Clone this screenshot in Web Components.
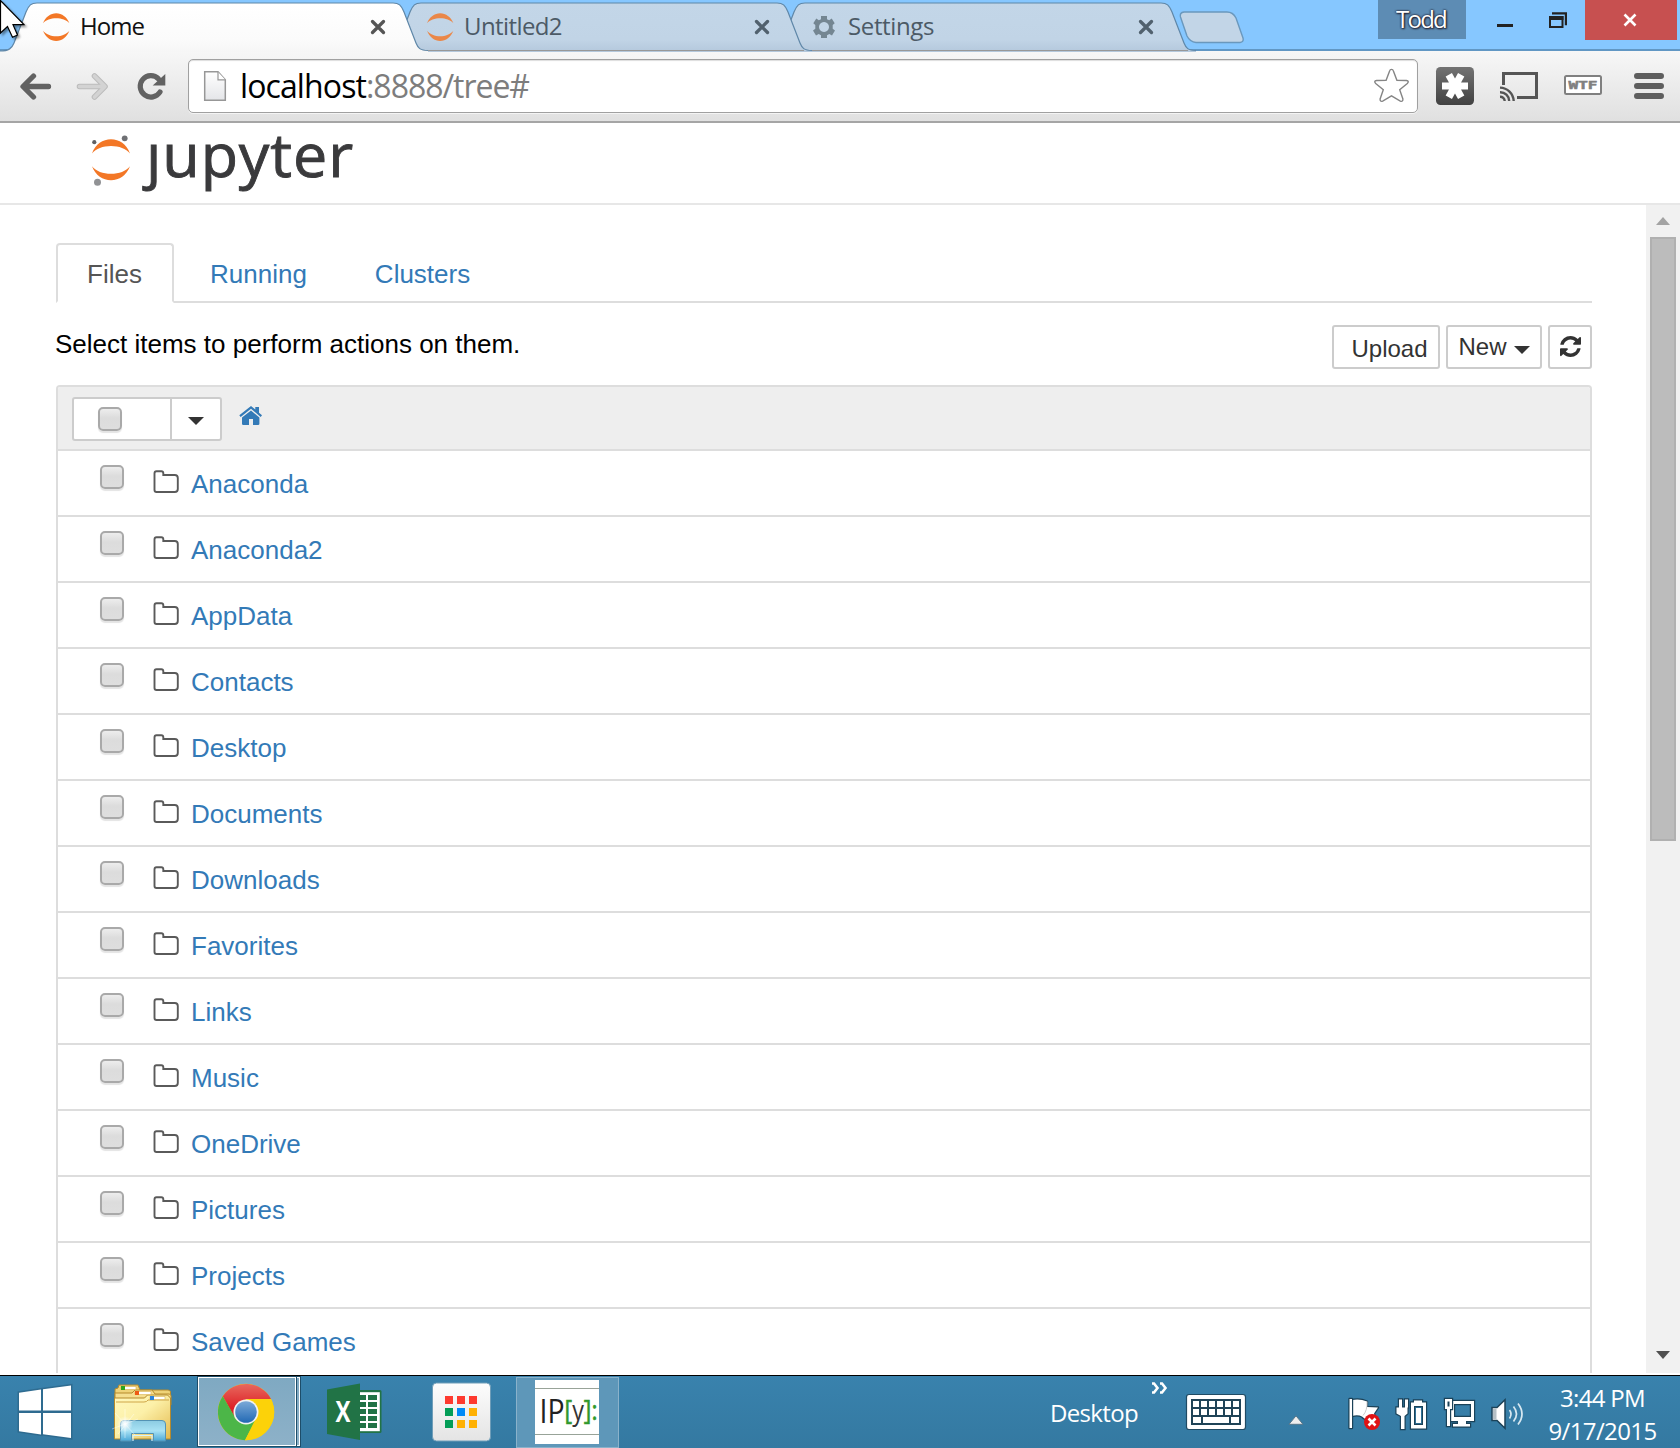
<!DOCTYPE html>
<html lang="en">
<head>
<meta charset="utf-8">
<title>Home</title>
<style>
html,body{margin:0;padding:0;height:1448px;overflow:hidden;background:#fff}
body{font-family:"Liberation Sans",Arial,sans-serif}
</style>
</head>
<body>
<desktop-screen></desktop-screen>
<script>
const UI = '"Open Sans","Noto Sans",sans-serif';
const define = (name, render, after) => customElements.define(name, class extends HTMLElement {
  connectedCallback() {
    if (this.shadowRoot) return;
    this.attachShadow({ mode: 'open' }).innerHTML = render(this);
    if (after) after(this);
  }
});

/* icon name -> [viewBox, markup] */
const ICONS = {
  jupyter: ['43 13 27 28', '<g fill="#f37726"><path d="M43 23.300C45.500 17 50.500 13.300 56.200 13.300S66.900 17 69.400 23.300C66.500 19.800 61.500 18.200 56.200 18.200S45.900 19.800 43 23.300Z"/><path d="M43 30.700C45.500 37 50.500 40.900 56.200 40.900S66.900 37 69.400 30.700C66.500 34.200 61.500 36.200 56.200 36.200S45.900 34.200 43 30.700Z"/></g>'],
  gear: ['813 16 22 22', '<path fill="#748692" fill-rule="evenodd" d="M821 16h6v3.300l2.200.9 2.500-1.700 3 4.800-2 1.700v3.800l2.300 1.700-3 4.900-2.700-1.300-2.300 1.200V38h-6v-2.700l-2.300-1.200-2.700 1.300-3-4.900 2.300-1.700V25l-2-1.700 3-4.800 2.500 1.700 2.200-.9ZM824 22a5 5 0 1 0 .01 0Z"/>'],
  close: ['0 0 16 16', '<path d="M2.500 2.500l11 11M13.500 2.500l-11 11" stroke="currentColor" stroke-width="3.300" stroke-linecap="round"/>'],
  back: ['19 72 34 29', '<path d="M33.500 76L23 86.500 33.500 97M23.500 86.500H48.500" fill="none" stroke="#626262" stroke-width="5.300" stroke-linecap="round" stroke-linejoin="round"/>'],
  forward: ['76 72 34 29', '<path d="M94.500 76L105 86.500 94.500 97M104 86.500H79.500" fill="none" stroke="#bcbcbc" stroke-width="5.600" stroke-linecap="round" stroke-linejoin="round"/><path d="M94.500 76L105 86.500 94.500 97M104 86.500H79.500" fill="none" stroke="#d3d3d3" stroke-width="3.600" stroke-linecap="round" stroke-linejoin="round"/>'],
  reload: ['137 72 30 29', '<path d="M160 92A10.700 10.700 0 1 1 158.500 78.800" fill="none" stroke="#626262" stroke-width="5.200" stroke-linecap="round"/><path d="M165.300 74v11.600h-12.600Z" fill="#626262"/>'],
  page: ['202 70 26 33', '<defs><linearGradient id="g" x2="0" y2="1"><stop stop-color="#fff"/><stop offset="1" stop-color="#e4e5e8"/></linearGradient></defs><path d="M204.700 71.800h13.300l7.300 8v20.500h-20.600Z" fill="url(#g)" stroke="#979797" stroke-width="1.500"/><path d="M218 72v7.800h7.300" fill="#fff" stroke="#979797" stroke-width="1.200"/>'],
  star: ['1373 67 37 37', '<path d="M1391.500 69.400q1.400 0 1.900 1.500l3.500 9.300 9.500.3q3.200.6.900 3l-7.600 6.200 3.200 9.300q.2 3-2.600 2.200l-8.800-5.300-8.800 5.300q-2.800.8-2.600-2.200l3.200-9.300-7.600-6.200q-2.300-2.400.9-3l9.500-.3 3.500-9.300q.5-1.500 1.900-1.500Z" fill="#fff" stroke="#858585" stroke-width="1.400"/>'],
  asterisk: ['1436 67 38 38', '<defs><linearGradient id="g" x2="0" y2="1"><stop stop-color="#737373"/><stop offset="1" stop-color="#414141"/></linearGradient></defs><rect x="1436" y="67" width="38" height="38" rx="4.500" fill="url(#g)"/><path d="M1442 86h26M1448.800 74.800l12.400 22.400M1461.200 74.800L1448.800 97.200" stroke="#fff" stroke-width="7.200"/>'],
  cast: ['1499 71 40 31', '<path d="M1503.500 85V73.500h33V97.500H1517" fill="none" stroke="#555" stroke-width="3"/><g fill="none" stroke="#555" stroke-width="2.400"><path d="M1500 87.600a14 14 0 0 1 13.700 13.400M1500 92.200a9 9 0 0 1 9.200 8.800M1500 96.700a4.500 4.500 0 0 1 4.700 4.300"/></g>'],
  wtf: ['1564 75 38 20', '<rect x="1565" y="76" width="36" height="18" rx="1.500" fill="#fff" stroke="#808080" stroke-width="2"/><text x="1568.500" y="89" font-family="DejaVu Sans Mono" font-weight="bold" font-size="11" textLength="29" lengthAdjust="spacingAndGlyphs" fill="#808080" stroke="#808080" stroke-width=".5">WTF</text>'],
  menu: ['1633 72 32 28', '<path d="M1637 76h24M1637 86h24M1637 96h24" stroke="#5e5e5e" stroke-width="6" stroke-linecap="round"/>'],
  mini: ['1496 23 18 5', '<path fill="#222" d="M1497 24h16v3h-16z"/>'],
  restore: ['1548 11 20 18', '<path d="M1552 12.200h15v13h-2.200v-10.600h-12.800z" fill="#222"/><path d="M1550 17h12.500v10H1550z" fill="none" stroke="#222" stroke-width="2"/><path d="M1549 16h14.500v4H1549z" fill="#222"/>'],
  winclose: ['1623 13 15 14', '<path d="M1624.500 14.500l11 11M1635.500 14.500l-11 11" stroke="#fff" stroke-width="2.600"/>'],
  logo: ['90 134 42 52', '<g fill="#f37726"><path d="M92 153.500C95.500 144 102.800 139.300 111 139.300S126.500 144 130 153.500C126 148.600 119 145.900 111 145.900S96 148.600 92 153.500Z"/><path d="M92 166.200C95.500 175.500 102.800 180.200 111 180.200S126.500 175.500 130 166.200C126 171.200 119 173.800 111 173.800S96 171.200 92 166.200Z"/></g><circle cx="94.300" cy="142.200" r="2.100" fill="#5f6063"/><circle cx="124.700" cy="138.300" r="2.900" fill="#6f7074"/><circle cx="97.500" cy="182.300" r="3.500" fill="#919295"/>'],
  caret: ['0 0 16 8', '<path fill="#333" d="M0 0h16L8 8z"/>'],
  refresh: ['0 0 1536 1536', '<path fill="#333" d="M1511 928q0 5-1 7-64 268-268 434.500T764 1536q-146 0-282.500-55T238 1324l-129 129q-19 19-45 19t-45-19-19-45V960q0-26 19-45t45-19h448q26 0 45 19t19 45-19 45l-137 137q71 66 161 102t187 36q134 0 250-65t186-179q11-17 53-117 8-23 30-23h192q13 0 22.500 9.500t9.500 22.500zM1536 128v448q0 26-19 45t-45 19h-448q-26 0-45-19t-19-45 19-45l138-138Q969 256 768 256q-134 0-250 65T332 500q-11 17-53 117-8 23-30 23H50q-13 0-22.500-9.500T18 608v-7q65-268 270-434.500T768 0q146 0 284 55.500T1297 212l130-129q19-19 45-19t45 19 19 45z"/>'],
  home: ['239 405 24 21', '<path fill="#337ab7" d="M251 410.500l8.400 7v6.200q0 1.300-1.300 1.300H253v-6h-4v6h-5.700q-1.300 0-1.300-1.300v-6.200ZM251 406l4.300 3.600V407h3.700v5.700l3 2.600-1.300 1.600L251 408.700l-10.300 8.200-1.400-1.600Z"/>'],
  folder: ['153.500 470.500 27 24', '<path d="M155 474q0-2.300 2-2.300h4.800q2 0 2 2v1.800h11.500q3 0 3 3v11q0 3-3 3H157q-2 0-2-2Z" fill="#fff" stroke="#5a5a5a" stroke-width="1.900"/>'],
  up: ['0 0 14 8', '<path fill="#a3a3a3" d="M0 8h14L7 0z"/>'],
  down: ['0 0 14 8', '<path fill="#505050" d="M0 0h14L7 8z"/>'],
  windows: ['17 1384 56 56', '<g fill="#fff" stroke="#2c6588" stroke-opacity=".75" stroke-width="3" paint-order="stroke"><path d="M19 1392.700l22-3.200v21H19zM43 1389.200l28-3.700v25H43zM19 1413h22v21.500l-22-3.300zM43 1413h28v25l-28-3.700z"/></g>'],
  explorer: ['111 1382 64 60', '<defs><linearGradient id="g" x2="1" y2="1"><stop stop-color="#fff8bd"/><stop offset=".45" stop-color="#fcf0a8"/><stop offset="1" stop-color="#e3b94d"/></linearGradient><linearGradient id="b" x2="0" y2="1"><stop stop-color="#8bcbe2"/><stop offset=".5" stop-color="#a9e2f4"/><stop offset="1" stop-color="#4aa8d8"/></linearGradient><radialGradient id="s"><stop stop-color="#fff"/><stop offset=".35" stop-color="#fff" stop-opacity=".7"/><stop offset="1" stop-color="#fff" stop-opacity="0"/></radialGradient></defs><g stroke="#b58a2d" stroke-width="1"><path d="M115 1398v-9l3-1 1-3h19l2 5h28q2.500 0 2.500 2v10H115z" fill="#efd378"/><path d="M115 1402v-9h17l3-3h17l3 4h14q2 0 2 2v9h-56z" fill="#f5df90"/><path d="M114.500 1398h30l3-3h20l3 3v41h-56z" fill="url(#g)"/></g><path d="M116 1402h28q3 0 4-2h21" fill="none" stroke="#cfa649"/><path fill="#fff" stroke="#d8b050" stroke-width=".6" d="M121 1386.500h15v3h-15zM135 1391.500h16v3h-16zM150 1396.500h15v3h-15z"/><path fill="#2fa51c" d="M121 1386h4v4h-4z"/><path fill="#ee5b13" d="M135 1391h4v4h-4z"/><path fill="#2b83d8" d="M150 1396h4v4h-4z"/><path d="M120.500 1441v-17q0-3.500 3.500-3.500h38q3.500 0 3.500 3.500v17h-12v-7.500h-22v7.500z" fill="url(#b)" stroke="#5493b4"/><path d="M133 1441v-5.500h19v5.500" fill="none" stroke="#d5f2fb" stroke-width="1.200"/><circle cx="125" cy="1424" r="8" fill="url(#s)"/><path d="M125 1409v29M112 1429l26-10M115 1413l20 22M118 1434l16-20" stroke="#fff" stroke-width=".7" opacity=".6"/>'],
  chrome: ['217 1383 58 58', '<defs><linearGradient id="g" x2="0" y2="1"><stop stop-color="#7ba9d8"/><stop offset="1" stop-color="#2269b4"/></linearGradient><linearGradient id="r" x2="0" y2="1"><stop stop-color="#e8695e"/><stop offset=".7" stop-color="#dd2127"/></linearGradient></defs><circle cx="246" cy="1412" r="28.200" fill="#fcd209"/><path d="M271 1399H246L235 1418 222.800 1396.200A28.200 28.200 0 0 1 271 1399Z" fill="url(#r)"/><path d="M222.800 1396.200L236 1419 256 1418 245 1440.200A28.200 28.200 0 0 1 222.800 1396.200Z" fill="#4cb648"/><path d="M245 1440.200L258 1416l-10-4 8-13h15A28.200 28.200 0 0 1 245 1440.200Z" fill="#fcd209"/><circle cx="246" cy="1412" r="12.500" fill="#f2f2f2"/><circle cx="246" cy="1412" r="10.800" fill="url(#g)"/>'],
  excel: ['326 1383 57 58', '<rect x="358" y="1390" width="23.500" height="43" rx="1.500" fill="#217346"/><path fill="#fff" d="M358 1392.200h21.800v39H358z"/><path fill="#217346" d="M359 1395h7v5h-7zM368 1395h9v5h-9zM359 1402h7v5h-7zM368 1402h9v5h-9zM359 1409h7v5h-7zM368 1409h9v5h-9zM359 1416h7v5h-7zM368 1416h9v5h-9zM359 1423h7v5h-7zM368 1423h9v5h-9z"/><path fill="#217346" d="M327 1389.500l33-6v56.500l-33-6z"/><text x="335.500" y="1422" font-family="Open Sans" font-weight="bold" font-size="28" textLength="15" lengthAdjust="spacingAndGlyphs" fill="#fff">X</text>'],
  apps: ['431 1382 60 60', '<defs><linearGradient id="g" x2="0" y2="1"><stop stop-color="#fdfdfd"/><stop offset="1" stop-color="#e4e4e4"/></linearGradient></defs><rect x="432.500" y="1383" width="58" height="58" rx="4" fill="url(#g)" stroke="#6f9db8"/><path fill="#fe3a2f" d="M445 1396h8v8h-8zM457 1396h8v8h-8zM469 1396h8v8h-8z"/><path fill="#049d57" d="M445 1408h8v8h-8zM445 1420h8v8h-8z"/><path fill="#008af7" d="M457 1408h8v8h-8z"/><path fill="#ffb103" d="M469 1408h8v8h-8zM457 1420h8v8h-8zM469 1420h8v8h-8z"/>'],
  ipy: ['535 1380 64 64', '<path fill="#fff" d="M535 1380h64v64h-64z"/><path d="M535 1388.500h64M535 1434.500h64" stroke="#98a398"/><text x="539.500" y="1422.500" font-family="Open Sans" font-size="33" textLength="58" lengthAdjust="spacingAndGlyphs" fill="#222">IP<tspan font-size="27" dy="-2.500" fill="#2f982b" stroke="#2f982b" stroke-width=".6">[</tspan><tspan font-size="27" fill="#333">y</tspan><tspan font-size="27" fill="#2f982b" stroke="#2f982b" stroke-width=".6">]:</tspan></text>'],
  chevrons: ['1150 1382 18 12', '<path d="M1152 1383.500h2l3.500 4.500-3.500 4.500h-2M1160 1383.500h2l3.500 4.500-3.500 4.500h-2" fill="none" stroke="#fff" stroke-width="2.600"/>'],
  keyboard: ['1185 1393 62 38', '<rect x="1186.500" y="1394.500" width="59" height="35" rx="2.500" fill="#fff" stroke="#1f4a63" stroke-width="1.200"/><path fill="#1f4357" d="M1191 1399h50v26h-50z"/><path fill="#fff" d="M1193 1401h6v6h-6zM1201 1401h6v6h-6zM1209 1401h6v6h-6zM1217 1401h6v6h-6zM1225 1401h6v6h-6zM1233 1401h6v6h-6zM1193 1409h6v6h-6zM1201 1409h6v6h-6zM1209 1409h6v6h-6zM1217 1409h6v6h-6zM1225 1409h6v6h-6zM1233 1409h6v6h-6zM1193 1417h8v6h-8zM1203 1417h26v6h-26zM1231 1417h8v6h-8z"/>'],
  tray: ['1288 1415 16 10', '<path fill="#eee" stroke="#56768a" d="M1289 1424.300L1296 1415.800l7 8.500z"/>'],
  flag: ['1347 1397 34 34', '<g stroke="#1b4258" stroke-width="2.400" paint-order="stroke" fill="#fff" stroke-linejoin="round"><path d="M1352 1400q8-1.500 15 1.500v5.500l11 .5-4 6 1 4q-9 4-13-1-4-2-10-.500z"/><path d="M1349.500 1399h2.500v29h-2.500z"/></g><path d="M1367 1401.500q.500 9-4 14" fill="none" stroke="#ccc"/><circle cx="1372" cy="1422" r="8" fill="#e01214"/><path d="M1368.500 1418.500l7 7M1375.500 1418.500l-7 7" stroke="#fff" stroke-width="2.600"/>'],
  power: ['1396 1398 33 32', '<g stroke="#1b4258" stroke-width="2.400" paint-order="stroke" fill="#fff"><path d="M1400 1399.500h3v8h3v-8h3v8h-9zM1397.500 1407.500h11v6l-3 2.500v13h-3.500v-13l-4.500-2.500z"/><path fill-rule="evenodd" d="M1412 1402.500h3v-2h8v2h4v26h-15zM1415 1406v19h9v-19z"/><path stroke="none" d="M1417 1408h5v15h-5z"/></g>'],
  network: ['1443 1397 33 32', '<g stroke="#1b4258" stroke-width="2.400" paint-order="stroke" fill="#fff"><path fill-rule="evenodd" d="M1452 1401h23v20h-8v3h4v2.500h-17v-2.500h5v-3h-7zM1455 1404v13h17v-13z"/><path d="M1446 1399h7v10h-2v17h-3v-17h-2z"/></g><path d="M1448.500 1401.500h2v5h-2z" fill="#1b4258"/>'],
  sound: ['1492 1398 33 32', '<path d="M1493 1407.500h5l8-7.800v28.500l-8-7.700h-5z" fill="#fff" stroke="#1b4258" stroke-width="1.500"/><path d="M1494 1408.500h3.500v11h-3.500z" fill="#b5c0c6"/><path d="M1510.500 1410q3 4 0 8.500M1514.500 1406.500q6 7.500 0 15M1519 1403.500q8 10.500 0 21" fill="none" stroke="#d7e8f1" stroke-width="1.700"/>']
};

define('ui-icon', h => {
  const [vb, art] = ICONS[h.getAttribute('name')];
  const [, , w, ht] = vb.split(' ');
  return `<style>:host{display:block;flex:none;width:${h.getAttribute('w') || w}px;height:${h.getAttribute('h') || ht}px}svg{display:block;width:100%;height:100%;overflow:visible}</style><svg viewBox="${vb}" preserveAspectRatio="none">${art}</svg>`;
});

/* Text whose tracking is adjusted so that it fills the width in its w attribute. */
define('fit-text', h => `<style>:host{display:block;flex:none;white-space:nowrap;width:${h.getAttribute('w')}px}span{display:inline-block;white-space:nowrap}</style><span><slot></slot></span>`,
  h => {
    const s = h.shadowRoot.querySelector('span'), n = h.textContent.length;
    s.style.letterSpacing = (h.getAttribute('w') - s.getBoundingClientRect().width) / n + 'px';
  });

define('browser-tab', h => {
  const on = h.hasAttribute('active'), gear = h.getAttribute('icon') === 'gear';
  const edge = 'M0 51C9 51 12 48 14 43L26 12C29 5 31 3 37 3H393C399 3 401 5 404 12L416 43C418 48 420 50.500 428 50.500';
  return `<style>
  :host{display:flex;position:relative;z-index:${h.getAttribute('z')};width:384px;height:51px;flex:none;box-sizing:border-box;align-items:center;font:24px/50px ${UI};color:${on ? '#111' : '#4c5a66'}}
  svg{position:absolute;left:0;top:0;overflow:visible;z-index:-1}
  .fav{display:flex;width:37px;margin-left:43px;margin-top:3px;opacity:${on || gear ? 1 : .82}}
  ui-icon.x{margin:3px -2px 0 auto;color:${on ? '#555' : '#51616e'}}
  </style>
  <svg width="430" height="52"><defs><linearGradient id="t" x2="0" y2="1"><stop stop-color="${on ? '#fff' : '#c3d6e8'}"/><stop offset=".75" stop-color="${on ? '#fbfbfb' : '#c1d4e6'}"/><stop offset="1" stop-color="${on ? '#f6f6f6' : '#b4c8dc'}"/></linearGradient></defs>
  <path d="${edge}V52H0Z" fill="url(#t)"/><path d="${edge}" fill="none" stroke="#5f87a8" stroke-width="1.200"/>${on ? '' : '<path d="M14 50.500H420" stroke="#989898"/>'}</svg>
  <div class="fav"><ui-icon name="${h.getAttribute('icon')}" style="${gear ? 'margin-left:2px' : ''}"></ui-icon></div>
  <fit-text w="${h.getAttribute('w')}">${h.textContent}</fit-text><ui-icon class="x" name="close"></ui-icon>`;
});

define('tab-strip', () => `<style>
  :host{display:flex;height:51px;background:#86c7ff;position:relative;z-index:1;align-items:flex-start;box-shadow:inset 0 -2px #6197c4;isolation:isolate}
  .new{flex:none;margin:11px 0 0 27px}
  .user{margin-left:134px;width:88px;height:39px;background:#5d8cb4;color:#fff;display:flex;justify-content:center;font:24px/36px ${UI};text-shadow:0 0 2px #223,0 0 2px #223,1px 1px 2px #223}
  .user fit-text{margin:1px 2px 0 0}
  .close{margin-left:17px;width:92px;height:40px;background:#c75050;display:flex;align-items:center;justify-content:center}
  .close ui-icon{margin-right:2px}
  </style>
  <browser-tab active icon="jupyter" w="64" z="3">Home</browser-tab><browser-tab icon="jupyter" w="98" z="2">Untitled2</browser-tab><browser-tab icon="gear" w="86" z="1">Settings</browser-tab>
  <svg class="new" width="65" height="33"><path d="M5 1H48Q54 1 57 7L64 27Q65 31 61 31.500H17Q11 31 8 25L1.500 6Q.500 1.500 5 1Z" fill="#c2d5e7" stroke="#6a98bd" stroke-width="1.400"/></svg>
  <div class="user"><fit-text w="50">Todd</fit-text></div>
  <ui-icon name="mini" style="margin:23px 0 0 30px"></ui-icon><ui-icon name="restore" style="margin:11px 0 0 34px"></ui-icon>
  <div class="close"><ui-icon name="winclose"></ui-icon></div>`);

define('tool-bar', () => `<style>
  :host{display:flex;align-items:center;box-sizing:border-box;height:72px;border-bottom:2px solid #a5a5a5;background:linear-gradient(#f7f7f7,#e0e0e0);padding-left:19px}
  .omni{display:flex;align-items:center;box-sizing:border-box;width:1230px;height:54px;margin:0 18px 0 21px;border:1.500px solid #a0a0a0;border-radius:5px;background:#fff;box-shadow:inset 0 1px 1px #ddd,0 1px #f4f4f4;padding:0 7px 0 13px}
  .url{display:flex;font:32px/48px ${UI};margin:0 auto 1px 12px;color:#000}.url fit-text+fit-text{color:#7d7d7d}
  .omni ui-icon+.url+ui-icon{margin-top:-1px}
  </style>
  <ui-icon name="back"></ui-icon><ui-icon name="forward" style="margin-left:23px"></ui-icon><ui-icon name="reload" style="margin-left:27px"></ui-icon>
  <div class="omni"><ui-icon name="page"></ui-icon><div class="url"><fit-text w="126">localhost</fit-text><fit-text w="163">:8888/tree#</fit-text></div><ui-icon name="star"></ui-icon></div>
  <ui-icon name="asterisk"></ui-icon><ui-icon name="cast" style="margin-left:25px"></ui-icon><ui-icon name="wtf" style="margin:0 0 2px 25px"></ui-icon><ui-icon name="menu" style="margin-left:31px"></ui-icon>`);

define('site-header', () => `<style>
  :host{display:flex;box-sizing:border-box;height:82px;border-bottom:2px solid #e7e7e7;padding-left:90px;background:#fff}
  ui-icon{margin-top:11px}
  .word{position:relative;height:80px;margin-left:14px;font:500 61px/80px ${UI};color:#3a3a3c;-webkit-text-stroke:.9px #3a3a3c}
  fit-text{margin-top:-9px}
  .word::after{content:"";position:absolute;left:0;top:2px;width:16px;height:18px;background:#fff}
  </style><ui-icon name="logo"></ui-icon><div class="word"><fit-text w="208">jupyter</fit-text></div>`);

define('nav-tabs', () => `<style>
  :host{display:flex;box-sizing:border-box;height:60px;border-bottom:2px solid #ddd;font-size:26px;line-height:37px;color:#337ab7}
  div{box-sizing:border-box;padding:13px 32px 0;margin-right:4px;height:60px}
  .on{width:118px;border:2px solid #ddd;border-bottom-color:#fff;border-radius:4px 4px 0 0;padding:11px 0 0 29px;color:#555}
  </style><div class="on">Files</div><div>Running</div><div>Clusters</div>`);

define('ui-button', () => `<style>:host{display:flex;box-sizing:border-box;height:44px;border:2px solid #ccc;border-radius:3px;background:#fff;color:#333;font-size:24px;line-height:36px;flex:none}</style><slot></slot>`);

define('check-box', () => `<style>:host{display:block;flex:none;box-sizing:border-box;width:24px;height:24px;border:2px solid #a9a9a9;border-radius:5px;background:linear-gradient(#ededed,#dcdcdc 45%,#dedede);box-shadow:0 2px 1px #0000001c}</style>`);

define('file-row', () => `<style>
  :host{display:flex;box-sizing:border-box;height:66px;border-bottom:2px solid #ddd;padding-left:42px;font-size:26px;line-height:37px;color:#337ab7;flex:none}
  check-box{margin-top:14px}ui-icon{margin:19px 11px 0 29px}span{padding-top:14.500px}
  </style><check-box></check-box><ui-icon name="folder"></ui-icon><span><slot></slot></span>`);

define('file-list', () => `<style>
  :host{display:flex;flex-direction:column;box-sizing:border-box;height:988px;overflow:hidden;border:2px solid #ddd;border-bottom:0;border-radius:4px 4px 0 0}
  .head{display:flex;box-sizing:border-box;height:64px;flex:none;background:#eee;border-bottom:2px solid #ddd;padding:10px 0 0 14px}
  .sel{display:flex;box-sizing:border-box;width:150px;height:44px;border:2px solid #ccc;border-radius:3px;background:#fff}
  .l{width:96px;box-sizing:border-box;padding:8px 0 0 24px}.r{border-left:2px solid #ccc;padding:18px 0 0 16px}
  .head>ui-icon{margin:8px 0 0 16.500px}
  </style><div class="head"><div class="sel"><div class="l"><check-box></check-box></div><div class="r"><ui-icon name="caret"></ui-icon></div></div><ui-icon name="home"></ui-icon></div>
  ${['Anaconda', 'Anaconda2', 'AppData', 'Contacts', 'Desktop', 'Documents', 'Downloads', 'Favorites', 'Links', 'Music', 'OneDrive', 'Pictures', 'Projects', 'Saved Games'].map(n => `<file-row>${n}</file-row>`).join('')}`);

define('scroll-bar', () => `<style>
  :host{display:flex;flex-direction:column;align-items:center;width:34px;height:1168px;background:#f1f1f1;flex:none}
  .thumb{box-sizing:border-box;width:26px;height:604px;border:2px solid #b0b0b0;background:#bcbcbc;margin:12px 0 auto}
  ui-icon{margin-top:12px}.d{margin-bottom:14px}
  </style><ui-icon name="up"></ui-icon><div class="thumb"></div><ui-icon class="d" name="down"></ui-icon>`);

define('notebook-page', () => `<style>
  :host{display:flex;height:1170px;background:#fff;justify-content:space-between}
  main{width:1536px;margin-left:56px;padding-top:38px}
  .bar{display:flex;height:82px;box-sizing:border-box;padding-top:22px;gap:6px;font-size:26px;line-height:37px;color:#000}
  .bar span{margin:1px auto 0 -1px}
  </style><main><nav-tabs></nav-tabs>
  <div class="bar"><span>Select items to perform actions on them.</span>
  <ui-button style="width:108px;padding:4px 0 0 17.500px">Upload</ui-button>
  <ui-button style="width:96px;padding:2px 0 0 10.500px">New<ui-icon name="caret" style="margin:17px 0 0 7px"></ui-icon></ui-button>
  <ui-button style="width:44px;padding:9px 0 0 10px"><ui-icon name="refresh" w="21" h="21"></ui-icon></ui-button></div>
  <file-list></file-list></main><scroll-bar></scroll-bar>`);

define('task-bar', () => `<style>
  :host{display:flex;align-items:center;box-sizing:border-box;height:73px;border-top:1px solid #000;background:linear-gradient(#3982ad,#3479a1);padding-left:17px;font:24px/33px ${UI};color:#fff}
  .chrome{display:flex;height:71px;width:104px;margin:0 0 1px 22px;box-sizing:border-box;background:#1d4d69;padding:1px;gap:1px}
  .chrome div{box-sizing:border-box;border:1px solid #fff;background:linear-gradient(#7fa9c2,#8db1c8)}
  .main{width:98px;padding:5px 0 0 18px}.chrome .more{flex:1;border-left:0}
  .ipy{display:flex;box-sizing:border-box;width:103px;height:71px;margin-left:25px;border:1px solid #8ab2cb;background:#5e97b9;padding:2px 0 0 18px}
  .clock{display:flex;flex-direction:column;align-items:center;width:107px;margin:4px 0 0 25px}
  </style>
  <ui-icon name="windows"></ui-icon><ui-icon name="explorer" style="margin-left:38px"></ui-icon>
  <div class="chrome"><div class="main"><ui-icon name="chrome"></ui-icon></div><div class="more"></div></div>
  <ui-icon name="excel" style="margin-left:25px"></ui-icon><ui-icon name="apps" style="margin-left:48px"></ui-icon>
  <div class="ipy"><ui-icon name="ipy"></ui-icon></div>
  <fit-text w="88" style="margin-left:431px">Desktop</fit-text>
  <ui-icon name="chevrons" style="margin:0 0 48px 12px"></ui-icon>
  <ui-icon name="keyboard" style="margin-left:17px"></ui-icon>
  <ui-icon name="tray" style="margin:15px 0 0 41px"></ui-icon>
  <ui-icon name="flag" style="margin:4px 0 0 43px"></ui-icon><ui-icon name="power" style="margin:4px 0 0 14px"></ui-icon><ui-icon name="network" style="margin:2px 0 0 14px"></ui-icon><ui-icon name="sound" style="margin:4px 0 0 16px"></ui-icon>
  <div class="clock"><fit-text w="85">3:44 PM</fit-text><fit-text w="108">9/17/2015</fit-text></div>`);

define('mouse-pointer', () => `<style>:host{position:absolute;left:0;top:0;z-index:9}svg{display:block;overflow:visible;filter:drop-shadow(2px 2px 1px #0006)}</style><svg width="26" height="40"><path d="M.500.500V33l7-6.500 5 10.700 5-2.200-4.500-10.300H24Z" fill="#fff" stroke="#000" stroke-width="1.200"/></svg>`);

define('desktop-screen', () => `<style>:host{display:flex;flex-direction:column;position:relative;width:1680px;height:1448px;overflow:hidden}</style>
  <tab-strip></tab-strip><tool-bar></tool-bar><site-header></site-header><notebook-page></notebook-page><task-bar></task-bar><mouse-pointer></mouse-pointer>`);
</script>
</body>
</html>
